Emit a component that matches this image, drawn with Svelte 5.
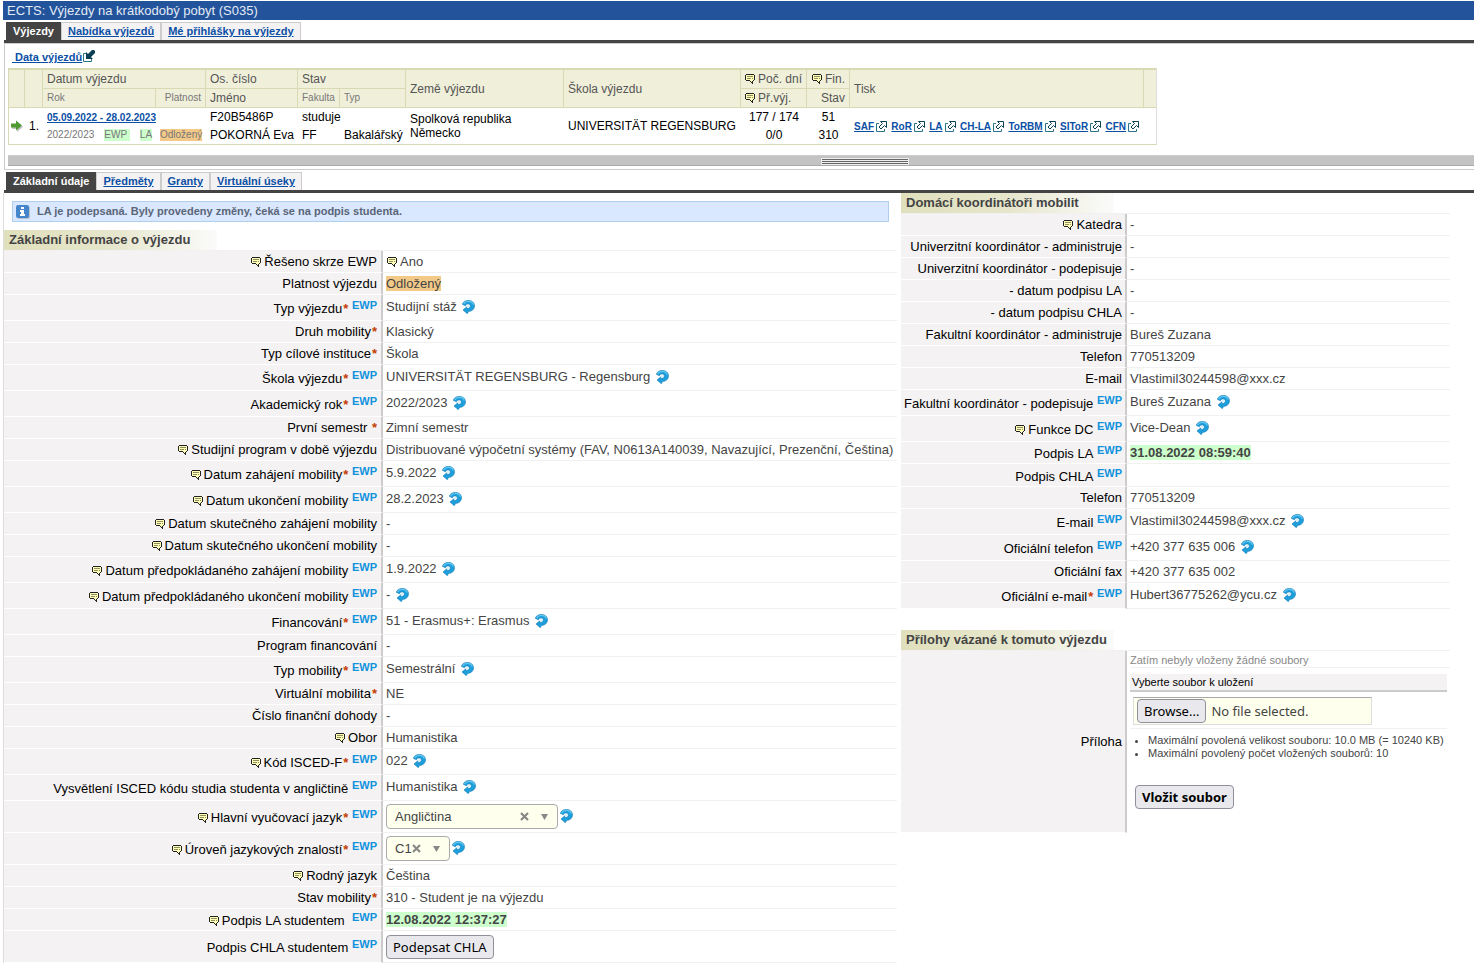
<script lang="ts">
  interface Row {
    label: string;
    value?: string;
    hint?: boolean;
    spaced?: boolean;
    required?: boolean;
    ewp?: boolean;
    sync?: boolean;
    kind?: 'hint' | 'postponed' | 'signed' | 'language' | 'level' | 'button';
  }

  const topTabs = ['Výjezdy', 'Nabídka výjezdů', 'Mé přihlášky na výjezdy'];
  const detailTabs = ['Základní údaje', 'Předměty', 'Granty', 'Virtuální úseky'];
  const prints = ['SAF', 'RoR', 'LA', 'CH-LA', 'ToRBM', 'SIToR', 'CFN'];

  const basic: Row[] = [
    { label: 'Řešeno skrze EWP', value: 'Ano', hint: true, kind: 'hint' },
    { label: 'Platnost výjezdu', value: 'Odložený', kind: 'postponed' },
    { label: 'Typ výjezdu', value: 'Studijní stáž', required: true, ewp: true, sync: true },
    { label: 'Druh mobility', value: 'Klasický', required: true },
    { label: 'Typ cílové instituce', value: 'Škola', required: true },
    { label: 'Škola výjezdu', value: 'UNIVERSITÄT REGENSBURG - Regensburg', required: true, ewp: true, sync: true },
    { label: 'Akademický rok', value: '2022/2023', required: true, ewp: true, sync: true },
    { label: 'První semestr\u00a0', value: 'Zimní semestr', required: true },
    { label: 'Studijní program v době výjezdu', value: 'Distribuované výpočetní systémy (FAV, N0613A140039, Navazující, Prezenční, Čeština)', hint: true },
    { label: 'Datum zahájení mobility', value: '5.9.2022', hint: true, required: true, ewp: true, sync: true },
    { label: 'Datum ukončení mobility', value: '28.2.2023', hint: true, ewp: true, sync: true },
    { label: 'Datum skutečného zahájení mobility', value: '-', hint: true },
    { label: 'Datum skutečného ukončení mobility', value: '-', hint: true },
    { label: 'Datum předpokládaného zahájení mobility', value: '1.9.2022', hint: true, ewp: true, sync: true },
    { label: 'Datum předpokládaného ukončení mobility', value: '-', hint: true, ewp: true, sync: true },
    { label: 'Financování', value: '51 - Erasmus+: Erasmus', required: true, ewp: true, sync: true },
    { label: 'Program financování', value: '-' },
    { label: 'Typ mobility', value: 'Semestrální', required: true, ewp: true, sync: true },
    { label: 'Virtuální mobilita', value: 'NE', required: true },
    { label: 'Číslo finanční dohody', value: '-' },
    { label: 'Obor', value: 'Humanistika', hint: true },
    { label: 'Kód ISCED-F', value: '022', hint: true, required: true, ewp: true, sync: true },
    { label: 'Vysvětlení ISCED kódu studia studenta v angličtině', value: 'Humanistika', ewp: true, sync: true },
    { label: 'Hlavní vyučovací jazyk', hint: true, required: true, ewp: true, kind: 'language' },
    { label: 'Úroveň jazykových znalostí', hint: true, required: true, ewp: true, kind: 'level' },
    { label: 'Rodný jazyk', value: 'Čeština', hint: true },
    { label: 'Stav mobility', value: '310 - Student je na výjezdu', required: true },
    { label: 'Podpis LA studentem\u00a0', value: '12.08.2022 12:37:27', hint: true, ewp: true, kind: 'signed' },
    { label: 'Podpis CHLA studentem', ewp: true, kind: 'button' },
  ];

  const coordinators: Row[] = [
    { label: 'Katedra', value: '-', hint: true },
    { label: 'Univerzitní koordinátor - administruje', value: '-' },
    { label: 'Univerzitní koordinátor - podepisuje', value: '-' },
    { label: '- datum podpisu LA', value: '-' },
    { label: '- datum podpisu CHLA', value: '-' },
    { label: 'Fakultní koordinátor - administruje', value: 'Bureš Zuzana' },
    { label: 'Telefon', value: '770513209' },
    { label: 'E-mail', value: 'Vlastimil30244598@xxx.cz' },
    { label: 'Fakultní koordinátor - podepisuje', value: 'Bureš Zuzana', ewp: true, sync: true },
    { label: 'Funkce DC', value: 'Vice-Dean', hint: true, ewp: true, sync: true },
    { label: 'Podpis LA', value: '31.08.2022 08:59:40', ewp: true, kind: 'signed' },
    { label: 'Podpis CHLA', value: '', ewp: true },
    { label: 'Telefon', value: '770513209' },
    { label: 'E-mail', value: 'Vlastimil30244598@xxx.cz', ewp: true, sync: true },
    { label: 'Oficiální telefon', value: '+420 377 635 006', ewp: true, sync: true },
    { label: 'Oficiální fax', value: '+420 377 635 002' },
    { label: 'Oficiální e-mail', value: 'Hubert36775262@ycu.cz', required: true, ewp: true, sync: true },
  ];

  let language = $state('Angličtina');
  let level = $state('C1');
</script>

{#snippet hintIcon()}
  <svg class="hint" width="10" height="10" viewBox="0 0 10 10" shape-rendering="crispEdges" aria-hidden="true">
    <path d="M1 1h8v5H8v3H7V8H6V7H1z" fill="#ffffb8" />
    <path d="M1 0h8v1H1zM0 1h1v5H0zM9 1h1v5H9zM1 6h4v1H1zM5 7h1v1H5zM6 8h1v1H6zM7 9h1v1H7zM7 7h1v2H7zM8 6h1v1H8z" fill="#222" />
    <path d="M2 2h6v1H2zM2 4h4v1H2zM7 4h1v1H7z" fill="#8f8f60" />
  </svg>
{/snippet}

{#snippet syncIcon()}
  <svg class="sync" width="13" height="14" viewBox="0 0 13 14" aria-hidden="true">
    <path d="M.3 4.300C1 1.900 3.300.4 6.400.4c3.600 0 6.100 2.300 6.100 5.400 0 3.200-2.500 5.500-6 5.700L5.300 13.700 1 10 4.800 6.800v1.700c2.100.2 3.500-.8 3.500-2.400S7.300 4 6 4C4.800 4 3.800 4.600 3.400 5.800z" fill="#1d9fdc" stroke="#1478b5" stroke-width=".6" />
    <path d="M1.600 3.800C2.600 2.200 4.300 1.400 6.400 1.400c2.500 0 4.300 1.200 4.900 3.200" fill="none" stroke="#62c8f0" stroke-width="1.300" />
    <circle cx="6" cy="6.200" r="1.200" fill="#d5effa" />
  </svg>
{/snippet}

{#snippet openIcon()}
  <svg class="open" width="11" height="11" viewBox="0 0 11 11" aria-hidden="true">
    <path d="M3 2.500H.5v8h8V8" fill="none" stroke="#2d7389" />
    <path d="M4.500.5h6v6L8.500 4.500 5 8 3 6 6.500 2.500z" fill="#fff" stroke="#0b3f56" />
  </svg>
{/snippet}

{#snippet clearIcon()}
  <svg width="9" height="9" viewBox="0 0 9 9" aria-hidden="true"><path d="M1 1l7 7M8 1L1 8" stroke="#888" stroke-width="2.200" /></svg>
{/snippet}

{#snippet caretIcon()}
  <svg class="caret" width="7" height="6" viewBox="0 0 7 6" aria-hidden="true"><path d="M0 0h7L3.500 6z" fill="#888" /></svg>
{/snippet}

{#snippet tabs(items: string[])}
  <nav class="tabs">
    {#each items as item, i}
      {#if i === 0}<span class="tab active">{item}</span>{:else}<span class="tab"><a href="#{i}">{item}</a></span>{/if}
    {/each}
  </nav>
{/snippet}

{#snippet form(rows: Row[])}
  <tbody>
    {#each rows as row}
      <tr class:tall={row.sync} class:empty={row.value === ''} class:control={row.kind === 'language' || row.kind === 'level' || row.kind === 'button'}>
        <th scope="row">
          {#if row.hint}{@render hintIcon()}{/if}{#if row.kind === 'language' || row.kind === 'level'}<label for={row.kind}>{row.label}</label>{:else}{row.label}{/if}{#if row.required}<b class="star">*</b>{/if}{#if row.ewp}&nbsp;<b class="ewp">EWP</b>{/if}
        </th>
        <td>
          {#if row.kind === 'language'}
            <span class="picker language">
              <select id="language" bind:value={language}><option></option><option>Angličtina</option><option>Čeština</option></select>
              <button class="clear" aria-label="Vymazat jazyk" onclick={() => (language = '')}>{@render clearIcon()}</button>
              {@render caretIcon()}
            </span>{@render syncIcon()}
          {:else if row.kind === 'level'}
            <span class="picker level">
              <select id="level" bind:value={level}><option></option><option>B2</option><option>C1</option></select>
              <button class="clear" aria-label="Vymazat úroveň" onclick={() => (level = '')}>{@render clearIcon()}</button>
              {@render caretIcon()}
            </span>{@render syncIcon()}
          {:else if row.kind === 'button'}
            <button class="btn">Podepsat CHLA</button>
          {:else if row.kind === 'hint'}
            {@render hintIcon()}{row.value}
          {:else if row.kind}
            <span class={row.kind}>{row.value}</span>
          {:else}
            {row.value}{#if row.sync}&nbsp;{@render syncIcon()}{/if}
          {/if}
        </td>
      </tr>
    {/each}
  </tbody>
{/snippet}

<div class="page">
  <h1>ECTS: Výjezdy na krátkodobý pobyt (S035)</h1>
  {@render tabs(topTabs)}

  <section class="trips">
    <div class="data-link">
      <a href="#data">&nbsp;Data výjezdů</a>
      <svg width="12" height="12" viewBox="0 0 12 12" aria-hidden="true">
        <path d="M3 3.500H.5v8h8V9" fill="none" stroke="#2d7389" />
        <path d="M3 2v7h7L8 7l4-4V1l-1-1H9L5 4z" fill="#0b3f56" />
      </svg>
    </div>

    <table class="list">
      <colgroup>
        <col class="c-arrow" /><col class="c-num" /><col class="c-date" /><col class="c-valid" /><col class="c-name" />
        <col class="c-fac" /><col class="c-days" /><col class="c-country" /><col class="c-school" /><col class="c-days" />
        <col class="c-fin" /><col class="c-print" /><col class="c-end" />
      </colgroup>
      <thead>
        <tr>
          <th rowspan="2"></th>
          <th rowspan="2"></th>
          <th colspan="2">Datum výjezdu</th>
          <th>Os. číslo</th>
          <th colspan="2">Stav</th>
          <th rowspan="2">Země výjezdu</th>
          <th rowspan="2">Škola výjezdu</th>
          <th>{@render hintIcon()}Poč. dní</th>
          <th class="right">{@render hintIcon()}Fin.</th>
          <th rowspan="2">Tisk</th>
          <th rowspan="2"></th>
        </tr>
        <tr>
          <th class="small">Rok</th>
          <th class="small right">Platnost</th>
          <th>Jméno</th>
          <th class="small">Fakulta</th>
          <th class="small">Typ</th>
          <th>{@render hintIcon()}Př.výj.</th>
          <th class="right">Stav</th>
        </tr>
      </thead>
      <tbody>
        <tr>
          <td rowspan="2" class="tight">
            <svg class="go" width="12" height="12" viewBox="0 0 12 12" aria-hidden="true">
              <path d="M1 5h5V2l6 5-6 5V9H1z" fill="#c4c4c4" />
              <path d="M0 3.500h5V.5L11 5.500 5 10.500v-3H0z" fill="#4f9a33" />
            </svg>
          </td>
          <td rowspan="2">1.</td>
          <td colspan="2"><a href="#trip">05.09.2022 - 28.02.2023</a></td>
          <td>F20B5486P</td>
          <td colspan="2">studuje</td>
          <td rowspan="2" class="country">Spolková republika Německo</td>
          <td rowspan="2">UNIVERSITÄT REGENSBURG</td>
          <td class="center">177 / 174</td>
          <td class="center">51</td>
          <td rowspan="2" class="prints">
            {#each prints as p}<a href="#{p}">{p}</a>{@render openIcon()}{' '}{/each}
          </td>
          <td rowspan="2"></td>
        </tr>
        <tr>
          <td class="small"><div class="flags"><span>2022/2023</span><span class="signed">EWP&nbsp;</span><span class="signed">LA</span></div></td>
          <td class="small right"><span class="postponed">Odložený</span></td>
          <td>POKORNÁ Eva</td>
          <td>FF</td>
          <td>Bakalářský</td>
          <td class="center">0/0</td>
          <td class="center">310</td>
        </tr>
      </tbody>
    </table>
    <div class="splitter"><i></i></div>
  </section>

  {@render tabs(detailTabs)}

  <main>
    <section>
      <p class="alert">
        <svg width="14" height="14" viewBox="0 0 14 14" aria-hidden="true">
          <rect x="1" y="1" width="13" height="13" rx="2" fill="#b9c3cf" />
          <rect width="13" height="13" rx="2" fill="#4585c9" />
          <path d="M5 2h3v2H5zM4 5h4v4h1v2H4V9h1V7H4z" fill="#fff" />
        </svg>
        LA je podepsaná. Byly provedeny změny, čeká se na podpis studenta.
      </p>
      <h2>Základní informace o výjezdu</h2>
      <table class="form basic">
        {@render form(basic)}
      </table>
    </section>

    <section>
      <h2>Domácí koordinátoři mobilit</h2>
      <table class="form">
        {@render form(coordinators)}
      </table>

      <h2 class="second">Přílohy vázané k tomuto výjezdu</h2>
      <table class="form">
        <tbody>
          <tr>
            <th scope="row">Příloha</th>
            <td class="upload">
              <p class="none">Zatím nebyly vloženy žádné soubory</p>
              <p class="pick">Vyberte soubor k uložení</p>
              <div class="file-row">
                <label class="file">
                  <input type="file" aria-label="Vyberte soubor k uložení" />
                  <span class="btn">Browse...</span>
                  <span>No file selected.</span>
                </label>
              </div>
              <ul>
                <li>Maximální povolená velikost souboru: 10.0 MB (= 10240 KB)</li>
                <li>Maximální povolený počet vložených souborů: 10</li>
              </ul>
              <button class="btn submit">Vložit soubor</button>
            </td>
          </tr>
        </tbody>
      </table>
    </section>
  </main>
</div>

<style>
  :global(body) { background: #fff; }
  .page {
    font: 13px/15px "Liberation Sans", Arial, sans-serif;
    color: #444; padding: 1px 0 0 3px;
  }
  h1 {
    margin: 0; padding: 2px 4px; background: #22539b; color: #e4ebf5;
    font-size: 13px; line-height: 15px; font-weight: 400;
  }
  a { color: #0b4fa5; font-weight: 700; }
  table { border-collapse: separate; border-spacing: 0; }
  p { margin: 0; }

  .tabs { display: flex; padding: 2px 2px 0; margin-left: 1px; border-bottom: 3px solid #444; font-size: 11px; font-weight: 700; }
  .tab { height: 18px; box-sizing: border-box; padding: 1px 6px 0; background: #f4f2f3; border: 1px solid #ccc; border-bottom: 0; }
  .tab.active { background: #444; border-color: #444; color: #fff; }

  .trips { margin-left: 1px; padding: 6px 0 3px 3px; border: 1px solid #ccc; border-right: 0; }
  .data-link { display: flex; align-items: flex-start; gap: 1px; padding-left: 4px; height: 18px; font-size: 11px; }

  .list { table-layout: fixed; width: 1149px; font-size: 12px; line-height: 14px; color: #000; border: 1px solid #d9d9b3; border-top-width: 2px; border-right-color: #ddd; }
  .c-arrow { width: 16px; }
  .c-num { width: 18px; }
  .c-date { width: 113px; }
  .c-valid { width: 50px; }
  .c-name { width: 92px; }
  .c-fac { width: 42px; }
  .c-days { width: 66px; }
  .c-country { width: 158px; }
  .c-school { width: 177px; }
  .c-fin { width: 43px; }
  .c-print { width: 294px; }
  .list th { height: 18px; padding: 0 0 0 4px; background: #f0efda; border-right: 1px solid #d9d9b3; border-bottom: 1px solid #d9d9b3; color: #555; font-weight: 400; text-align: left; white-space: nowrap; }
  .list th:last-child { border-right: 0; }
  .list thead tr:last-child th:last-child { border-right: 1px solid #d9d9b3; }
  .list td { height: 18px; padding: 0 0 0 4px; white-space: nowrap; }
  .list td.tight { padding-left: 2px; }
  .list .small { font-size: 10px; color: #777; }
  .list .right { text-align: right; padding-right: 4px; }
  .list .center { text-align: center; padding-left: 0; }
  .list .country { white-space: normal; padding-right: 30px; }
  .list td a { font-size: 10px; }
  .go { display: block; }
  .flags { display: flex; gap: 10px; }
  .flags span, .small .postponed { line-height: 12px; }
  .small .postponed { display: inline-block; }
  .open { margin: 0 1px 0 2px; vertical-align: -2px; }

  .splitter { display: flex; justify-content: center; margin-top: 10px; height: 9px; background: #c3c3c3; border-bottom: 1px solid #aaa; border-top: 1px solid #ccc; }
  .splitter i { width: 86px; height: 5px; margin: 3px 0 0 248px; box-sizing: border-box; background: linear-gradient(#eee 1px, #666 1px 2px, #eee 2px); border: solid #666; border-width: 1px 0; box-shadow: 0 0 0 1px #eee; }

  main { display: grid; grid-template-columns: 893fr 549fr; gap: 4px; padding-right: 24px; border-left: 1px solid #ddd; }
  .alert {
    display: flex; align-items: center; gap: 7px; height: 19px; margin: 8px; padding-left: 3px;
    background: #d9e8ff; border: 1px solid #aed0ee; color: #5a6577; font-size: 11px; font-weight: 700;
  }
  h2 {
    width: max-content; min-width: 213px; box-sizing: border-box; margin: 0; padding: 2px 7px 3px 5px;
    background: linear-gradient(90deg, #e0e0bd, #e6e6cc 50%, #fbfbfb);
    font-size: 13px; line-height: 15px; font-weight: 700;
  }
  h2.second { margin-top: 21px; }

  .form { width: 100%; table-layout: fixed; border-top: 1px solid #f1f1f1; }
  .form th { width: 221px; height: 21px; padding: 0 3px 0 0; border-right: 2px solid #ccc; border-bottom: 1px solid #fff; background: #f4f2f3; color: #000; font-weight: 400; text-align: right; white-space: nowrap; }
  .basic th { width: 373px; padding-right: 4px; }
  .form td { padding: 0 0 0 3px; border-bottom: 1px solid #f1f1f1; white-space: nowrap; }
  .form .empty th { height: 22px; }
  .form .tall th { height: 25px; }
  .form .tall td { padding-bottom: 2px; }
  .form .control th { height: 31px; }
  .hint { margin-right: 3px; vertical-align: -1px; }
  .form td .hint { margin-left: 1px; }
  .sync { margin-left: 2px; vertical-align: -3px; }
  .star { padding-left: 1px; color: #c43c00; }
  .ewp { color: #1192dd; font-size: 11px; line-height: 13px; vertical-align: 4px; }
  .postponed { background: #f3c988; }
  .signed { background: #ccffcc; }
  .form .signed { font-weight: 700; }

  .picker { position: relative; display: inline-block; vertical-align: middle; }
  .picker select {
    appearance: none; display: block; width: 100%; height: 25px; padding: 0 8px; background: #ffffee; color: #444;
    border: 1px solid #aaa; border-radius: 4px; font: inherit;
  }
  .language { width: 172px; }
  .level { width: 64px; }
  .clear { position: absolute; top: 8px; right: 29px; padding: 0; border: 0; background: none; line-height: 0; cursor: pointer; }
  .caret { position: absolute; top: 10px; right: 10px; pointer-events: none; }

  .btn {
    height: 24px; box-sizing: border-box; padding: 0 6px; background: #e9e9ed; color: #000;
    border: 1px solid #8f8f9d; border-radius: 4px; font: 13px/22px "Noto Sans", sans-serif;
  }
  .form td.upload { vertical-align: top; border-bottom: 0; padding-right: 3px; font-size: 11px; line-height: 13px; }
  .none { margin-right: -3px; padding: 3px 0 0; color: #888; border-bottom: 1px solid #f1f1f1; }
  .pick { margin-top: 6px; padding: 2px 2px 1px; background: #f4f2f3; border-bottom: 2px solid #ccc; color: #000; }
  .file-row { padding: 5px 3px 3px; border-bottom: 1px solid #f1f1f1; }
  .file {
    position: relative; display: flex; align-items: center; gap: 5px; width: 239px; height: 28px; box-sizing: border-box; padding-left: 3px;
    background: #ffffee; border: 1px solid #ddd; border-top: 1px solid #aaa; font: 13px/22px "Noto Sans", sans-serif;
  }
  .file input { position: absolute; inset: 0; opacity: 0; width: 100%; }
  ul { margin: 5px 0 25px; padding-left: 18px; }
  .submit { display: block; margin: 0 0 24px 5px; font-weight: 700; }
</style>
